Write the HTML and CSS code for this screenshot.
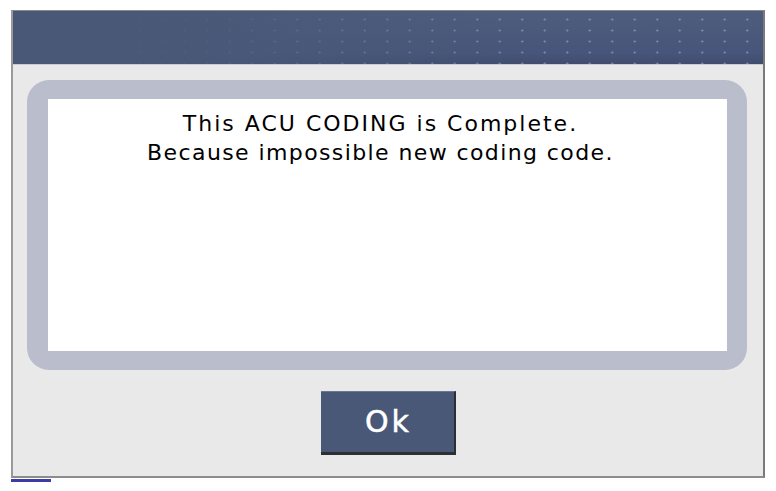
FILE: index.html
```html
<!DOCTYPE html>
<html>
<head>
<meta charset="utf-8">
<link rel="stylesheet" href="styles.css">
</head>
<body>
<div class="frame">
  <div class="header"></div>
  <div class="content">
    <div class="panel">
      <div class="message">
        <p class="line line1">This ACU CODING is Complete.</p>
        <p class="line line2">Because impossible new coding code.</p>
      </div>
    </div>
    <div class="actions">
      <button class="ok">Ok</button>
    </div>
  </div>
</div>
<div class="tab"></div>
</body>
</html>
```

FILE: styles.css
```css
html, body {
  margin: 0;
  padding: 0;
  background: #ffffff;
}
body {
  padding: 10px 0 0 11px;
  font-family: "DejaVu Sans", "Liberation Sans", sans-serif;
}
.frame {
  width: 750px;
  height: 465px;
  border-top: 1px solid #8a8a8a;
  border-left: 2px solid #9a9a9a;
  border-right: 2px solid #7a7a7a;
  border-bottom: 2px solid #8c8c8c;
  background: #e9e9e9;
  display: flex;
  flex-direction: column;
}
.header {
  height: 53px;
  background-color: #4a5878;
  background-image:
    radial-gradient(circle, rgba(160,175,205,0.6) 0.8px, transparent 1.4px),
    linear-gradient(#4e5c7d, #47557a 80%, #3f4c6e);
  background-size: 22.5px 11px, 100% 100%;
  background-position: 3px 3px, 0 0;
  position: relative;
}
.header::before {
  content: "";
  position: absolute;
  inset: 0;
  background: linear-gradient(90deg, #4a5878 0%, rgba(74,88,120,0.9) 25%, rgba(74,88,120,0) 70%);
}
.content {
  flex: 1;
  display: flex;
  flex-direction: column;
  padding: 15px 16px 0 14px;
  border-top: 1px solid #c9ccd4;
}
.panel {
  height: 252px;
  padding: 19px 20px 19px 21px;
  background: #b9bdcc;
  border-radius: 22px;
}
.message {
  height: 100%;
  background: #ffffff;
  padding: 10px 14px 0 0;
  box-sizing: border-box;
  text-align: center;
  color: #000;
}
.line {
  margin: 0;
  font-size: 22px;
  line-height: 29px;
}
.line1 { letter-spacing: 2px; }
.line2 { letter-spacing: 1.4px; }
.actions {
  display: flex;
  justify-content: center;
  padding-top: 21px;
  padding-left: 2px;
}
.ok {
  width: 135px;
  height: 64px;
  background: #4a5878;
  border: none;
  border-right: 2px solid #2e2e36;
  border-bottom: 3px solid #2e2e36;
  border-top: 1px solid #6b7793;
  color: #ffffff;
  font-family: "DejaVu Sans", "Liberation Sans", sans-serif;
  font-size: 30px;
  letter-spacing: 3px;
  -webkit-text-stroke: 0.5px #ffffff;
  padding: 0 0 2px 3px;
}
.tab {
  width: 40px;
  height: 3px;
  margin-top: 1px;
  background: #3c3ca8;
}
```
